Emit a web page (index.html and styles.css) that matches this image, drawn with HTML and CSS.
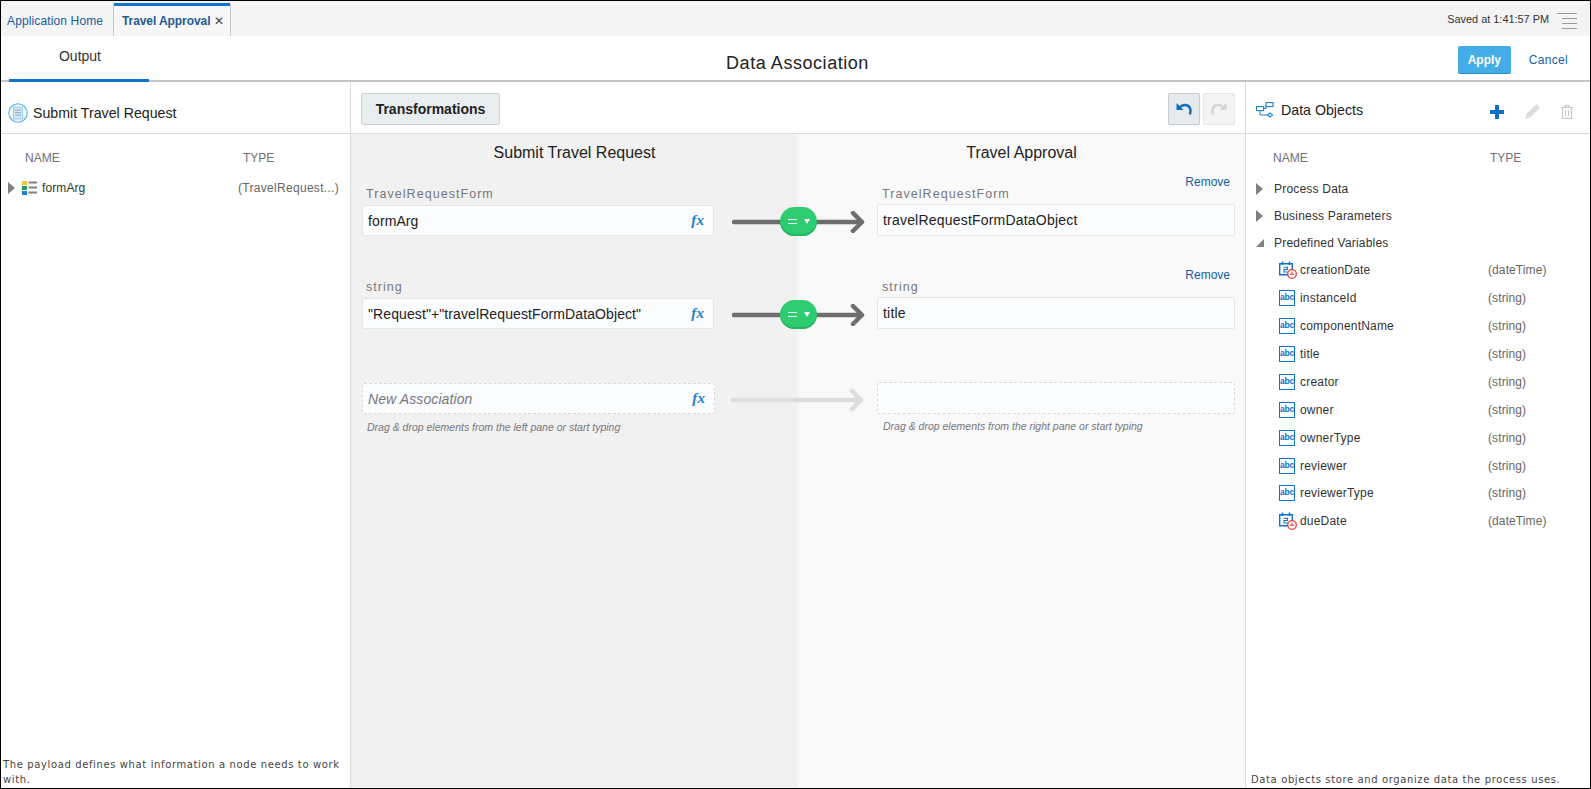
FILE: index.html
```html
<!DOCTYPE html>
<html lang="en">
<head>
<meta charset="utf-8">
<title>Data Association</title>
<link rel="stylesheet" href="styles.css">
</head>
<body>
<svg class="defs" width="0" height="0" aria-hidden="true">
  <symbol id="i-date" viewBox="0 0 18 18">
    <path d="M.7 2.700h12.600v11H.7z" fill="#fff" stroke="#0f72c8" stroke-width="1.400"/>
    <path d="M3.500 .5v3.500M10.500 .5v3.500" stroke="#0f72c8" stroke-width="1.500"/>
    <path d="M4.500 6.200h4v2.300h-3.500v2.500h3.800" fill="none" stroke="#0f72c8" stroke-width="1.100"/>
    <circle cx="13" cy="13" r="4.300" fill="#fff" stroke="#ee3b3b" stroke-width="1.300"/>
    <path d="M13 10.500V13.600M10.800 13.300h4.400" fill="none" stroke="#ee3b3b" stroke-width="1.100"/>
  </symbol>
  <symbol id="i-arrow" viewBox="0 0 133 22">
    <path d="M2 11H130M121 2l9 9-9 9" fill="none" stroke="currentColor" stroke-width="4.500" stroke-linecap="round" stroke-linejoin="round"/>
  </symbol>
</svg>
<div class="frame">
  <nav class="tabbar">
    <a class="tab">Application Home</a>
    <a class="tab tab-active">Travel Approval <span class="tab-close">✕</span></a>
    <div class="tabbar-end">
      <span class="saved">Saved at 1:41:57 PM</span>
      <span class="burger"><i class="b-long"></i><i></i><i></i><i></i></span>
    </div>
  </nav>
  <header class="titlebar">
    <div class="titlebar-tab">Output</div>
    <h1 class="page-title">Data Association</h1>
    <div class="titlebar-actions">
      <button class="btn-apply">Apply</button>
      <a class="link-cancel">Cancel</a>
    </div>
  </header>
  <main class="panes">
    <section class="pane pane-left">
      <div class="pane-head">
        <svg class="head-ico" width="20" height="20" viewBox="0 0 20 20"><circle cx="10" cy="10" r="9.200" fill="#f4fafe" stroke="#5cb0e4" stroke-width="1.100"/><rect x="5.500" y="4" width="9" height="12" fill="#d5e7f5" stroke="#8dbfe3" stroke-width=".8"/><path d="M7 7h6M7 9.500h6M7 12h6" stroke="#7aa9cc" stroke-width=".9"/></svg>
        <span class="pane-title">Submit Travel Request</span>
      </div>
      <div class="cols cols-left"><span>NAME</span><span>TYPE</span></div>
      <div class="tree-row tree-left">
        <svg class="caret" width="8" height="12" viewBox="0 0 8 12"><path d="M0 0l7 6-7 6z" fill="#7f7f85"/></svg>
        <svg class="form-ico" width="15" height="14" viewBox="0 0 15 14"><rect width="5" height="4" fill="#f2c53d"/><rect y="5" width="5" height="4" fill="#1f9c5a"/><rect y="10" width="5" height="4" fill="#1f7fd6"/><path d="M6.500 1.500H15M6.500 6.500H15M6.500 11.500H15" stroke="#808080" stroke-width="2"/></svg>
        <span class="tree-name">formArg</span>
        <span class="tree-type type-left">(TravelRequest...)</span>
      </div>
      <p class="pane-foot">The payload defines what information a node needs to work with.</p>
    </section>

    <section class="pane pane-center">
      <div class="pane-head center-head">
        <button class="btn-transform">Transformations</button>
        <div class="history">
          <button class="btn-hist btn-undo"><svg width="16" height="14" viewBox="0 0 16 14"><path d="M.5 1v7h7z" fill="#0f6fc6"/><path d="M3.500 5.500C7 1.800 13 2.300 14.300 7c.4 1.800.2 3.500-.4 5.500" fill="none" stroke="#0f6fc6" stroke-width="2.500"/></svg></button>
          <button class="btn-hist btn-redo"><svg width="16" height="14" viewBox="0 0 16 14"><path d="M15.500 1v7h-7z" fill="#d2d4d6"/><path d="M12.500 5.500C9 1.800 3 2.300 1.700 7c-.4 1.800-.2 3.500.4 5.500" fill="none" stroke="#d2d4d6" stroke-width="2.500"/></svg></button>
        </div>
      </div>
      <div class="map">
        <div class="map-titles"><h2>Submit Travel Request</h2><h2>Travel Approval</h2></div>

        <div class="assoc">
          <div class="label-cell"><span class="var-type">TravelRequestForm</span></div>
          <div></div>
          <div class="label-cell label-target"><a class="remove">Remove</a><span class="var-type">TravelRequestForm</span></div>
          <div class="field"><span>formArg</span><i class="fx">fx</i></div>
          <div class="connector">
            <svg class="arrow" width="133" height="22"><use href="#i-arrow"/></svg>
            <span class="pill"><b class="eq"></b><b class="pill-caret"></b></span>
          </div>
          <div class="field field-target"><span>travelRequestFormDataObject</span></div>
        </div>

        <div class="assoc assoc-2">
          <div class="label-cell"><span class="var-type">string</span></div>
          <div></div>
          <div class="label-cell label-target"><a class="remove">Remove</a><span class="var-type">string</span></div>
          <div class="field"><span>"Request"+"travelRequestFormDataObject"</span><i class="fx">fx</i></div>
          <div class="connector">
            <svg class="arrow" width="133" height="22"><use href="#i-arrow"/></svg>
            <span class="pill"><b class="eq"></b><b class="pill-caret"></b></span>
          </div>
          <div class="field field-target"><span>title</span></div>
        </div>

        <div class="assoc assoc-new">
          <div class="field field-new"><em>New Association</em><i class="fx">fx</i></div>
          <div class="connector connector-new">
            <svg class="arrow" width="133" height="22"><use href="#i-arrow"/></svg>
          </div>
          <div class="field field-new field-target"></div>
          <p class="hint">Drag &amp; drop elements from the left pane or start typing</p>
          <div></div>
          <p class="hint hint-target">Drag &amp; drop elements from the right pane or start typing</p>
        </div>
      </div>
    </section>

    <section class="pane pane-right">
      <div class="pane-head">
        <svg class="head-ico" width="18" height="16" viewBox="0 0 18 16"><g fill="#fff" stroke="#1f7fd0" stroke-width="1.100"><rect x="10" y=".6" width="7" height="4"/><rect x=".6" y="4.600" width="7" height="4"/><path d="M14 11l2.500 2-2.500 2-2.500-2z"/></g><path d="M7.500 6.500H10V3M4 9v4h7.500" fill="none" stroke="#1f7fd0" stroke-width="1"/></svg>
        <span class="pane-title">Data Objects</span>
        <div class="obj-actions">
          <svg width="14" height="14" viewBox="0 0 14 14"><path d="M7 0v14M0 7h14" stroke="#0f6fc6" stroke-width="4"/></svg>
          <svg width="17" height="17" viewBox="0 0 17 17"><path d="M12.500 1l3.500 3.500L6 14.500 1 16l1.500-5z" fill="#dcdcdc"/></svg>
          <svg width="12" height="14" viewBox="0 0 12 14"><path d="M0 2.500h12M4 2V.7h4V2" fill="none" stroke="#c8c8c8" stroke-width="1.200"/><path d="M1.500 3v10.300h9V3M4.500 5.500v5.500M7.500 5.500v5.500" fill="none" stroke="#c8c8c8" stroke-width="1.200"/></svg>
        </div>
      </div>
      <div class="cols cols-right"><span>NAME</span><span>TYPE</span></div>
      <ul class="obj-list">
        <li class="group"><svg width="8" height="12" viewBox="0 0 8 12"><path d="M0 0l7 6-7 6z" fill="#7f7f85"/></svg><span>Process Data</span></li>
        <li class="group"><svg width="8" height="12" viewBox="0 0 8 12"><path d="M0 0l7 6-7 6z" fill="#7f7f85"/></svg><span>Business Parameters</span></li>
        <li class="group"><svg width="8" height="12" viewBox="0 0 8 12"><path d="M8 2v8H0z" fill="#7f7f85"/></svg><span>Predefined Variables</span></li>
        <li class="leaf"><svg class="leaf-ico" width="18" height="18"><use href="#i-date"/></svg><span class="leaf-name">creationDate</span><span class="tree-type">(dateTime)</span></li>
        <li class="leaf"><span class="abc">abc</span><span class="leaf-name">instanceId</span><span class="tree-type">(string)</span></li>
        <li class="leaf"><span class="abc">abc</span><span class="leaf-name">componentName</span><span class="tree-type">(string)</span></li>
        <li class="leaf"><span class="abc">abc</span><span class="leaf-name">title</span><span class="tree-type">(string)</span></li>
        <li class="leaf"><span class="abc">abc</span><span class="leaf-name">creator</span><span class="tree-type">(string)</span></li>
        <li class="leaf"><span class="abc">abc</span><span class="leaf-name">owner</span><span class="tree-type">(string)</span></li>
        <li class="leaf"><span class="abc">abc</span><span class="leaf-name">ownerType</span><span class="tree-type">(string)</span></li>
        <li class="leaf"><span class="abc">abc</span><span class="leaf-name">reviewer</span><span class="tree-type">(string)</span></li>
        <li class="leaf"><span class="abc">abc</span><span class="leaf-name">reviewerType</span><span class="tree-type">(string)</span></li>
        <li class="leaf"><svg class="leaf-ico" width="18" height="18"><use href="#i-date"/></svg><span class="leaf-name">dueDate</span><span class="tree-type">(dateTime)</span></li>
      </ul>
      <p class="pane-foot">Data objects store and organize data the process uses.</p>
    </section>
  </main>
</div>
</body>
</html>
```

FILE: styles.css
```css
* { box-sizing: border-box; }
html, body { margin: 0; height: 100%; }
body { font-family: "Liberation Sans", Arial, sans-serif; font-size: 12px; color: #333; background: #fff; overflow: hidden; }
.defs { display: block; height: 0; }
.frame { width: 1591px; height: 789px; border: 1px solid #000; display: flex; flex-direction: column; overflow: hidden; }

.tabbar { height: 35px; flex: none; background: #f4f4f4; display: flex; align-items: stretch; padding-left: 6px; }
.tab { color: #14609f; font-size: 12px; letter-spacing: .13px; padding: 5px 0 0; line-height: 30px; }
.tab:first-child { width: 106px; }
.tab-active { width: 118px; margin-top: 2px; padding: 3px 0 0 8px; line-height: 30px; letter-spacing: -.08px; border: solid #c5ccd2; border-width: 0 1px; box-shadow: inset 0 3px 0 #0f72cc; font-weight: 700; color: #245b8f; background: #f6f6f6; white-space: nowrap; }
.tab-close { font-weight: 400; font-size: 12px; color: #444; margin-left: 0; }
.tabbar-end { margin-left: auto; display: flex; align-items: center; padding-right: 13px; }
.saved { font-size: 10.900px; color: #333; margin-right: 8px; }
.burger { width: 20px; display: flex; flex-direction: column; align-items: flex-end; gap: 3.500px; margin-top: 5px; }
.burger i { display: block; width: 15px; height: 1.500px; background: #9a9a9a; }
.burger .b-long { width: 20px; }

.titlebar { height: 46px; flex: none; display: grid; grid-template-columns: 1fr auto 1fr; border-bottom: 2px solid #c4c4c4; padding-left: 8px; }
.titlebar-tab { width: 140px; height: 46px; padding-left: 2px; text-align: center; font-size: 14px; line-height: 40px; border-bottom: 3px solid #0f72cc; color: #333; }
.page-title { margin: 0 4px 0 0; font-size: 18px; font-weight: 400; letter-spacing: .55px; line-height: 55px; color: #222; }
.titlebar-actions { display: flex; justify-content: flex-end; align-items: flex-start; padding: 10px 22px 0 0; }
.btn-apply { width: 53px; height: 28px; border: 0; border-bottom: 1px solid #2a8fd0; border-radius: 2px; background: #44ace6; color: #fff; font: 700 12px "Liberation Sans", sans-serif; padding: 0; }
.link-cancel { color: #14609f; font-size: 12px; letter-spacing: .3px; line-height: 28px; margin-left: 18px; }

.panes { flex: 1; min-height: 0; display: grid; grid-template-columns: 350px 894px 1fr; }
.pane { display: flex; flex-direction: column; min-height: 0; min-width: 0; }
.pane-left { border-right: 1px solid #dcdcdc; }
.pane-right { border-left: 1px solid #dcdcdc; }
.pane-center { width: 894px; }
.pane-head { height: 52px; flex: none; display: flex; align-items: center; border-bottom: 1px solid #dcdcdc; }
.pane-left .pane-head { padding: 11px 0 0 7px; }
.pane-right .pane-head { padding: 4px 0 0 10px; }
.pane-title { font-size: 14.200px; color: #222; margin-left: 5px; }
.pane-right .pane-title { margin-left: 7px; }
.center-head { padding: 2px 10px 0 10px; justify-content: space-between; }
.btn-transform { width: 139px; height: 32px; background: #e8edf0; border: 1px solid #cbd1d5; border-radius: 2px; font: 700 14px "Liberation Sans", sans-serif; color: #222; padding: 0; }
.history { display: flex; gap: 3px; }
.btn-hist { width: 32px; height: 32px; padding: 0; border-radius: 2px; display: flex; align-items: center; justify-content: center; }
.btn-undo { background: #e7ebee; border: 1px solid #c6ccd1; }
.btn-redo { background: #f4f4f4; border: 1px solid #e6e6e6; }
.obj-actions { margin: 4px 0 0 auto; display: flex; align-items: center; padding-right: 17px; gap: 20px; }

.cols { height: 44px; flex: none; display: flex; align-items: center; padding-top: 3px; font-size: 12px; color: #6f6f76; }
.cols-left { padding-left: 24px; }
.cols-left span:first-child { width: 218px; }
.cols-right { padding-left: 27px; }
.cols-right span:first-child { width: 217px; }

.tree-row { display: flex; align-items: center; height: 22px; }
.tree-left { padding-left: 7px; margin-top: -1px; }
.form-ico { margin-left: 6px; }
.tree-name { margin-left: 5px; font-size: 12px; letter-spacing: .1px; width: 196px; }
.tree-type { color: #666; font-size: 12px; letter-spacing: .1px; }
.type-left { white-space: nowrap; letter-spacing: .3px; }
.pane-foot { margin: auto 0 0; font-family: "DejaVu Sans", sans-serif; font-size: 10px; letter-spacing: .62px; line-height: 15px; color: #444; padding: 0 4px 1px 2px; }
.pane-right .pane-foot { padding-left: 5px; }

.map { flex: 1; background: linear-gradient(to right, #f1f1f1 50%, #f9f9f9 50%); padding-left: 11px; }
.map-titles { height: 41px; display: grid; grid-template-columns: 1fr 1fr; margin-left: -11px; }
.map-titles h2 { margin: 0; font-size: 16px; font-weight: 400; text-align: center; color: #222; line-height: 38px; }
.assoc { display: grid; grid-template-columns: 352px 163px 358px; grid-template-rows: 30px 31px; }
.assoc-2 { margin-top: 32px; }
.assoc-new { margin-top: 54px; grid-template-columns: 353px 162px 358px; grid-template-rows: 31px auto; }
.label-cell { display: flex; align-items: flex-end; padding: 0 0 4px 4px; }
.label-target { position: relative; padding-left: 5px; }
.var-type { font-size: 12.500px; letter-spacing: 1.050px; color: #77777d; }
.remove { position: absolute; right: 5px; top: 0; color: #14609f; font-size: 12px; }
.field { height: 31px; background: #fbfcfd; border: 1px solid #e3e5e7; border-radius: 2px; display: flex; align-items: center; justify-content: space-between; padding: 0 9px 0 5px; font-size: 14px; letter-spacing: .1px; color: #222; }
.field-target { height: 32px; margin-top: -1px; padding-left: 5px; letter-spacing: .2px; }
.field-new { border: 1px dashed #d9d9d9; padding-right: 9px; }
.field-new em { color: #77777d; }
.fx { font-family: "Liberation Serif", serif; font-weight: 700; font-style: italic; font-size: 15px; color: #1f7cc9; }
.connector { display: flex; align-items: center; position: relative; padding: 2px 0 0 18px; color: #6e6e6e; }
.arrow { display: block; flex: none; }
.connector-new { padding: 3px 0 0 16px; color: #dedede; }
.pill { position: absolute; left: 66px; top: 2px; width: 37px; height: 29px; border-radius: 15px; background: #2ecc71; box-shadow: inset 0 -2px 0 #27b362; display: flex; align-items: center; justify-content: center; gap: 7px; }
.eq { width: 9px; height: 5px; border: solid #f2f2f2; border-width: 1.500px 0; }
.pill-caret { width: 0; height: 0; border-left: 3px solid transparent; border-right: 3px solid transparent; border-top: 5px solid #fff; }
.hint { margin: 7px 0 0 5px; font-size: 10.500px; font-style: italic; color: #77777d; line-height: 13px; }
.hint-target { margin: 6px 0 0 6px; }

.obj-list { list-style: none; margin: -2px 0 0; padding: 0; }
.obj-list li { display: flex; align-items: center; font-size: 12px; }
.group { height: 26.800px; padding-left: 10px; }
.group span { margin-left: 10px; color: #333; letter-spacing: .2px; }
.leaf { height: 27.900px; padding-left: 33px; }
.leaf-ico { flex: none; }
.abc { flex: none; width: 16px; height: 16px; border: 1.500px solid #0f72c8; background: #fff; color: #0f72c8; font-size: 8.500px; font-weight: 700; letter-spacing: -.2px; line-height: 13px; text-align: center; overflow: visible; }
.leaf-name { width: 188px; margin-left: 3px; letter-spacing: .2px; }
.abc + .leaf-name { margin-left: 5px; width: 188px; }
```
